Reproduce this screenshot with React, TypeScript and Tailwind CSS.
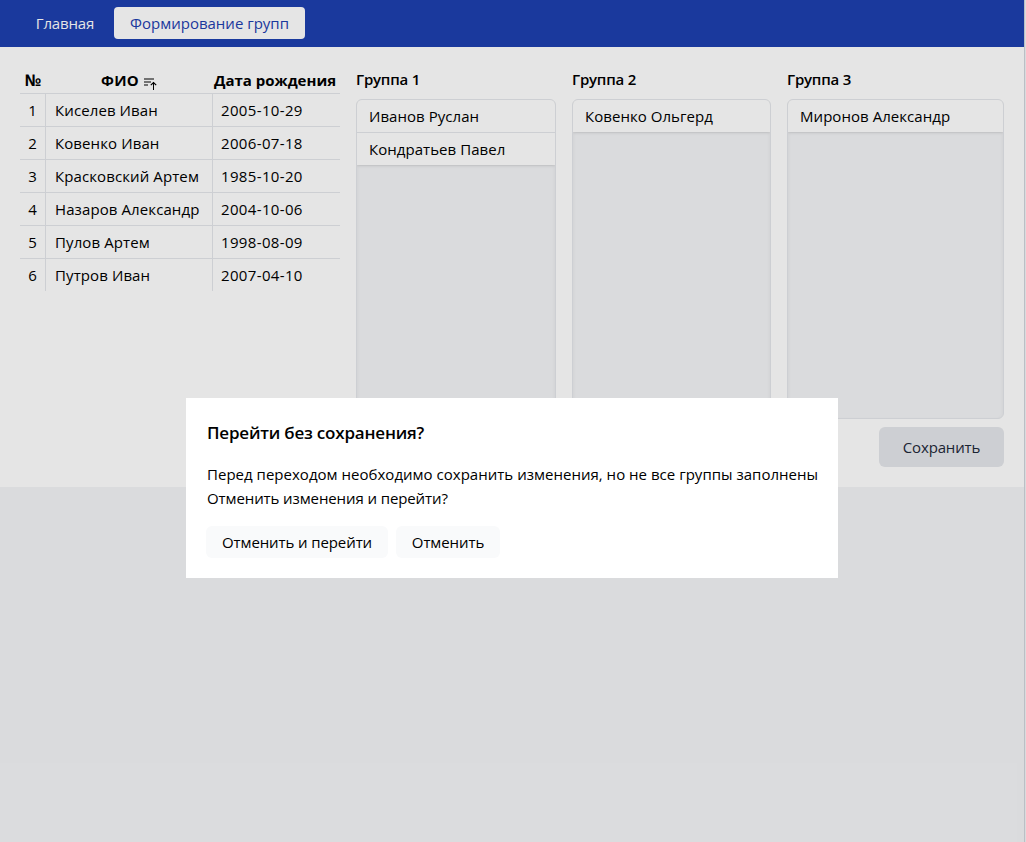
import React from "react";

const people: [string, string][] = [
  ["Киселев Иван", "2005-10-29"],
  ["Ковенко Иван", "2006-07-18"],
  ["Красковский Артем", "1985-10-20"],
  ["Назаров Александр", "2004-10-06"],
  ["Пулов Артем", "1998-08-09"],
  ["Путров Иван", "2007-04-10"],
];

const groups = [
  { title: "Группа 1", members: ["Иванов Руслан", "Кондратьев Павел"], width: "w-[200px]" },
  { title: "Группа 2", members: ["Ковенко Ольгерд"], width: "w-[199px]" },
  { title: "Группа 3", members: ["Миронов Александр"], width: "w-[217px]" },
];

function SortIcon() {
  return (
    <svg width="14" height="14" viewBox="0 0 14 14" className="mt-1.5 shrink-0">
      <path d="M0 2h10v2H0zM0 5h7v2H0zM0 8h4v2H0z" fill="#7f7f7f" shapeRendering="crispEdges" />
      <path d="M9 6h1v8H9z" fill="#000" shapeRendering="crispEdges" />
      <path d="M6.8 9.2l2.7-2.7l2.7 2.7" fill="none" stroke="#000" strokeWidth="1.2" />
    </svg>
  );
}

export default function App() {
  return (
    <div className="relative h-[842px] w-[1026px] overflow-hidden bg-gray-100 font-['Open_Sans','Noto_Sans',sans-serif] text-[15px] leading-6 text-black">
      <div className="h-full w-[1025px] border-r border-gray-300">
        <nav className="flex h-[47px] items-start gap-1 bg-[#1e40af] px-5 pt-[7px]">
          <a className="flex h-8 w-[90px] items-center justify-center whitespace-nowrap tracking-[-0.15px] text-white">Главная</a>
          <a className="flex h-8 w-[191px] items-center justify-center whitespace-nowrap rounded bg-white text-[#1e40af]">
            Формирование групп
          </a>
        </nav>
        <main className="flex h-[440px] gap-4 bg-white p-5">
          <div className="w-80">
            <div className="grid grid-cols-[26px_167px_127px] border-b border-gray-200 font-bold">
              <div className="flex h-[26px] items-center justify-center text-base">№</div>
              <div className="flex h-[26px] items-center justify-center gap-[5px] tracking-[0.2px]">
                ФИО
                <SortIcon />
              </div>
              <div className="flex h-[26px] items-center whitespace-nowrap pl-px">Дата рождения</div>
            </div>
            <div className="divide-y divide-gray-200">
              {people.map(([name, date], i) => (
                <div
                  key={name}
                  className={"grid grid-cols-[26px_167px_127px] " + (i === people.length - 1 ? "h-8" : "h-[33px]")}
                >
                  <div className="flex items-center justify-center border-r border-gray-200">{i + 1}</div>
                  <div className="flex items-center whitespace-nowrap border-r border-gray-200 pl-[9px] tracking-[0.1px]">{name}</div>
                  <div className="flex items-center whitespace-nowrap pl-2 tracking-[0.35px]">{date}</div>
                </div>
              ))}
            </div>
          </div>
          <div className="flex flex-col items-end gap-2">
            <div className="flex gap-4">
              {groups.map((g) => (
                <section key={g.title} className={g.width}>
                  <h2 className="mb-2 font-semibold tracking-[-0.2px]">{g.title}</h2>
                  <div className="h-80 overflow-hidden rounded-md border border-gray-200 bg-gray-100 shadow-inner">
                    <ul className="divide-y divide-gray-200 bg-white shadow">
                      {g.members.map((m, i) => (
                        <li
                          key={m}
                          className={
                            "flex items-center whitespace-nowrap px-3 tracking-[0.05px] " +
                            (i === g.members.length - 1 ? "h-8" : "h-[33px]")
                          }
                        >
                          {m}
                        </li>
                      ))}
                    </ul>
                  </div>
                </section>
              ))}
            </div>
            <button className="h-10 w-[125px] rounded-md bg-gray-200 tracking-[-0.15px] text-gray-800">Сохранить</button>
          </div>
        </main>
      </div>
      <div className="absolute inset-0 bg-black/10" />
      <div className="absolute left-[186px] top-[398px] h-[180px] w-[652px] bg-white px-5 pt-[21px]">
        <h3 className="pl-px text-[17px] font-semibold leading-7 tracking-[-0.2px]">Перейти без сохранения?</h3>
        <p className="mt-[15px] whitespace-nowrap pl-px tracking-[0.02px]">
          Перед переходом необходимо сохранить изменения, но не все группы заполнены
        </p>
        <p className="whitespace-nowrap pl-px tracking-[-0.1px]">Отменить изменения и перейти?</p>
        <div className="mt-4 flex gap-2 tracking-[-0.1px]">
          <button className="h-8 w-[182px] rounded-md bg-gray-50">Отменить и перейти</button>
          <button className="h-8 w-[104px] rounded-md bg-gray-50">Отменить</button>
        </div>
      </div>
    </div>
  );
}
